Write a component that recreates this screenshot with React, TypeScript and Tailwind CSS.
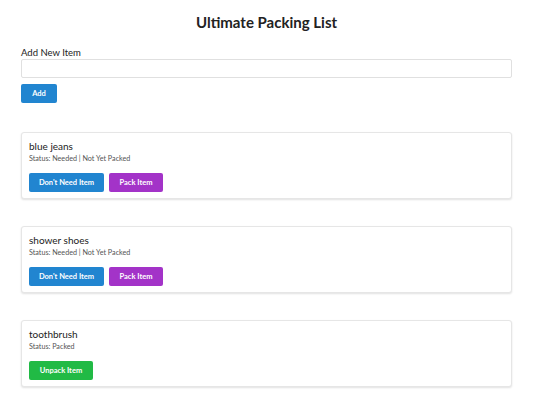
import React from "react";

type Item = {
  name: string;
  status: string;
  packed: boolean;
};

const items: Item[] = [
  { name: "blue jeans", status: "Status: Needed | Not Yet Packed", packed: false },
  { name: "shower shoes", status: "Status: Needed | Not Yet Packed", packed: false },
  { name: "toothbrush", status: "Status: Packed", packed: true },
];

function ItemCard({ item }: { item: Item }) {
  return (
    <div className="h-[67px] rounded-[3px] border border-[#e6e6e6] bg-white px-[7px] pt-[6px] shadow-[0_1px_2px_rgba(0,0,0,0.12)]">
      <div className="text-[10px] leading-[14px] text-[#222]">{item.name}</div>
      <div className="mt-[1px] text-[7.2px] leading-[10px] text-[#555]">{item.status}</div>
      <div className="mt-[9px] flex gap-[5px]">
        {item.packed ? (
          <button className="h-[19px] w-[64px] rounded-[2px] bg-[#21ba45] text-[7.5px] font-bold text-white">
            Unpack Item
          </button>
        ) : (
          <>
            <button className="h-[19px] w-[75px] rounded-[2px] bg-[#2185d0] text-[7.5px] font-bold text-white">
              Don't Need Item
            </button>
            <button className="h-[19px] w-[54px] rounded-[2px] bg-[#a333c8] text-[7.5px] font-bold text-white">
              Pack Item
            </button>
          </>
        )}
      </div>
    </div>
  );
}

export default function App() {
  return (
    <div
      className="min-h-[400px] w-[535px] bg-white pl-[21px]"
      style={{ fontFamily: "Lato, 'Noto Sans', sans-serif" }}
    >
      <div className="w-[491px]">
        <h1 className="pt-[11px] text-center text-[15px] font-bold leading-[22px] text-[#222]">
          Ultimate Packing List
        </h1>

        {/* add form */}
        <div className="mt-[14px]">
          <label className="block text-[9.5px] leading-[12px] text-[#222]">Add New Item</label>
          <input className="block h-[19px] w-full rounded-[2px] border border-[#e0e0e0] bg-white outline-none" />
          <button className="mt-[6px] h-[19px] w-[36px] rounded-[2px] bg-[#2185d0] text-[7.5px] font-bold text-white">
            Add
          </button>
        </div>

        <div className="mt-[29px] flex flex-col gap-[27px]">
          {items.map((item) => (
            <ItemCard key={item.name} item={item} />
          ))}
        </div>
      </div>
    </div>
  );
}
